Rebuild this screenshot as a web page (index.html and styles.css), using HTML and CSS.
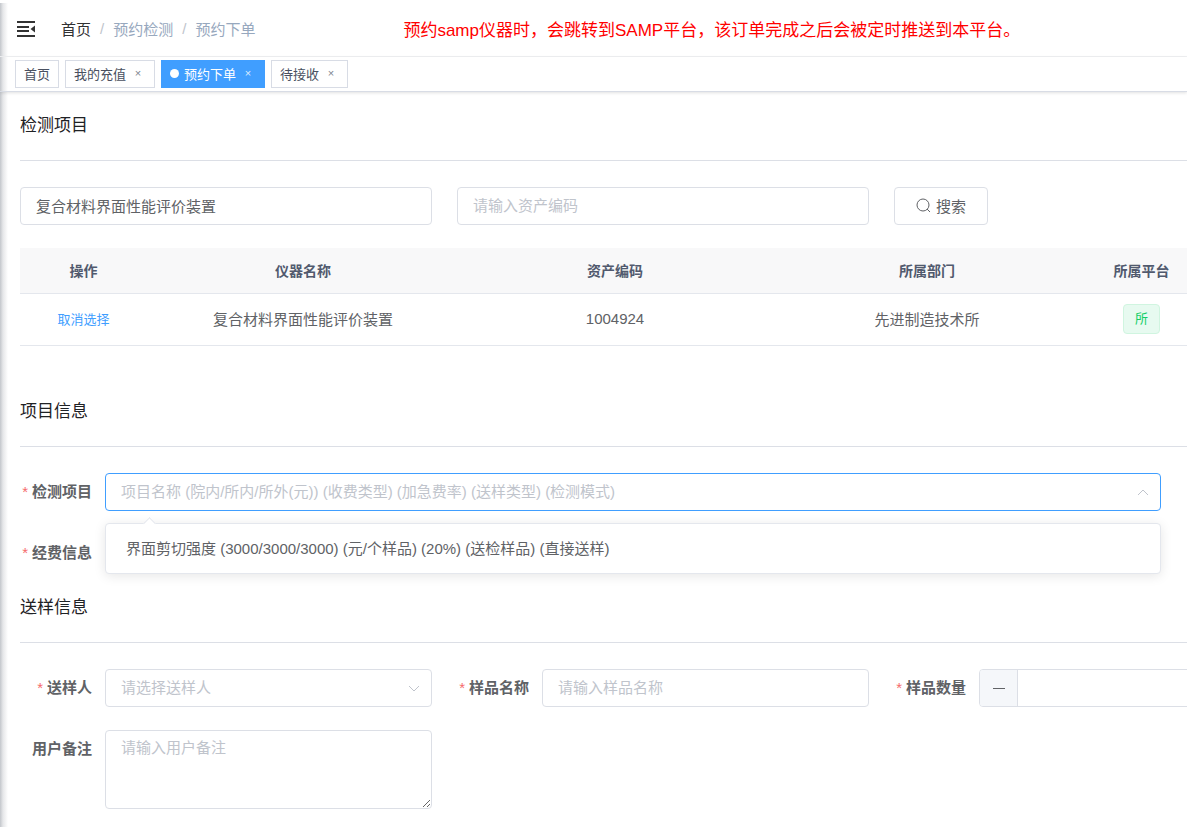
FILE: index.html
```html
<!DOCTYPE html>
<html lang="zh-CN">
<head>
    <meta charset="utf-8">
    <meta name="viewport" content="width=device-width, initial-scale=1">
    <title>预约下单</title>
    <link rel="stylesheet" href="styles.css">
</head>
<body>
    <div class="app-main">

        <header class="navbar">
            <button class="hamburger" type="button" aria-label="收起菜单">
                <svg viewBox="0 0 18 16" width="18" height="16">
                    <path d="M0 1h18M0 6h12M0 10h12M0 15h18" stroke="#333" stroke-width="2" fill="none"/>
                    <path d="M18 4.5v7L13.5 8z" fill="#333"/>
                </svg>
            </button>
            <nav class="breadcrumb">
                <a class="breadcrumb-home" href="#">首页</a>
                <span class="breadcrumb-separator">/</span>
                <span>预约检测</span>
                <span class="breadcrumb-separator">/</span>
                <span>预约下单</span>
            </nav>
            <p class="notice">预约samp仪器时，会跳转到SAMP平台，该订单完成之后会被定时推送到本平台。</p>
        </header>

        <nav class="tags-view">
            <div class="tag-item"><a href="#">首页</a></div>
            <div class="tag-item"><a href="#">我的充值</a><button class="tag-close" type="button" aria-label="关闭我的充值">×</button></div>
            <div class="tag-item active"><a href="#">预约下单</a><button class="tag-close" type="button" aria-label="关闭预约下单">×</button></div>
            <div class="tag-item"><a href="#">待接收</a><button class="tag-close" type="button" aria-label="关闭待接收">×</button></div>
        </nav>

        <main class="content">
            <section class="section">
                <h2 class="section-title">检测项目</h2>

                <form class="form-row">
                    <input class="input" type="text" id="instrumentName" name="instrumentName" aria-label="仪器名称" value="复合材料界面性能评价装置">
                    <input class="input" type="text" id="assetCode" name="assetCode" aria-label="资产编码" placeholder="请输入资产编码">
                    <button class="search-button" type="button">
                        <svg viewBox="0 0 15 15" width="15" height="15" fill="none" stroke="#606266">
                            <circle cx="7" cy="7" r="6"/>
                            <path d="M11 11l3 3"/>
                        </svg>
                        搜索
                    </button>
                </form>

                <table class="table">
                    <colgroup>
                        <col class="col-action">
                        <col>
                        <col>
                        <col>
                        <col class="col-platform">
                    </colgroup>
                    <thead>
                        <tr>
                            <th>操作</th>
                            <th>仪器名称</th>
                            <th>资产编码</th>
                            <th>所属部门</th>
                            <th>所属平台</th>
                        </tr>
                    </thead>
                    <tbody>
                        <tr>
                            <td><button class="text-button" type="button">取消选择</button></td>
                            <td>复合材料界面性能评价装置</td>
                            <td>1004924</td>
                            <td>先进制造技术所</td>
                            <td><span class="badge">所</span></td>
                        </tr>
                    </tbody>
                </table>
            </section>

            <section class="section">
                <h2 class="section-title">项目信息</h2>

                <div class="form-item form-item-wide">
                    <label class="form-label required" for="project">检测项目</label>
                    <div class="select-box">
                        <select class="input select focused" id="project" name="project">
                            <option value="">项目名称 (院内/所内/所外(元)) (收费类型) (加急费率) (送样类型) (检测模式)</option>
                        </select>
                        <svg class="select-arrow" viewBox="0 0 12 12" width="12" height="12"><path d="M1 9l5-5 5 5"/></svg>
                        <ul class="dropdown">
                            <li class="dropdown-item">界面剪切强度 (3000/3000/3000) (元/个样品) (20%) (送检样品) (直接送样)</li>
                        </ul>
                    </div>
                </div>

                <div class="form-item form-item-wide">
                    <span class="form-label required">经费信息</span>
                </div>
            </section>

            <section>
                <h2 class="section-title">送样信息</h2>

                <form class="form-row">
                    <div class="form-item">
                        <label class="form-label required" for="sender">送样人</label>
                        <div class="select-box">
                            <select class="input select" id="sender" name="sender">
                                <option value="">请选择送样人</option>
                            </select>
                            <svg class="select-arrow" viewBox="0 0 12 12" width="12" height="12"><path d="M1 4l5 5 5-5"/></svg>
                        </div>
                    </div>

                    <div class="form-item">
                        <label class="form-label required" for="sampleName">样品名称</label>
                        <input class="input" type="text" id="sampleName" name="sampleName" placeholder="请输入样品名称">
                    </div>

                    <div class="form-item">
                        <label class="form-label required" for="sampleCount">样品数量</label>
                        <div class="input-number">
                            <button class="decrease" type="button" aria-label="减少">
                                <svg viewBox="0 0 12 12" width="12" height="12"><path d="M0 6.5h12" stroke="#606266"/></svg>
                            </button>
                            <input class="count" type="text" id="sampleCount" name="sampleCount">
                        </div>
                    </div>

                    <div class="form-item">
                        <label class="form-label" for="remark">用户备注</label>
                        <textarea class="input textarea" id="remark" name="remark" placeholder="请输入用户备注"></textarea>
                    </div>
                </form>
            </section>
        </main>

    </div>
</body>
</html>
```

FILE: styles.css
```css
*{
    box-sizing: border-box;
}

body{
    margin: 0;
    background-color: white;
    color: #606266;
    font-family: "Liberation Sans", "Noto Sans CJK SC", sans-serif;
    font-size: 15px;
    overflow-x: hidden;
}

a{
    color: inherit;
    text-decoration: none;
}

button, input, select, textarea{
    font-family: inherit;
    font-size: 15px;
    color: #606266;
}

button{
    padding: 0;
    border: none;
    background: none;
    cursor: pointer;
}

/* shadow of the side menu falls on the left edge */
.app-main{
    min-height: calc(100vh - 3px);
    margin-top: 3px;
    overflow: hidden;
    background: linear-gradient(to right, #c3c6cb, #e6e7e9 3px, white 8px);
}

/* navbar */
.navbar{
    display: flex;
    align-items: center;
    height: 54px;
    padding: 0 0 2px 17px;
    border-bottom: 1px solid #f0f1f3;
}
.hamburger{
    display: flex;
    margin-right: 26px;
}
.breadcrumb{
    display: flex;
    align-items: center;
    color: #97a8be;
}
.breadcrumb-home{
    color: #303133;
}
.breadcrumb-separator{
    margin: 0 9px;
    color: #c0c4cc;
}
.notice{
    margin: 0 0 0 148px;
    color: red;
    font-size: 17px;
}

/* opened pages */
.tags-view{
    display: flex;
    gap: 6px;
    height: 35px;
    padding: 3px 15px;
    border-bottom: 1px solid #d8dce5;
    box-shadow: 0 1px 3px rgba(0, 0, 0, .12);
}
.tag-item{
    display: flex;
    align-items: center;
    height: 28px;
    padding: 0 8px 2px;
    border: 1px solid #d8dce5;
    background-color: white;
    color: #495060;
    font-size: 13px;
}
.tag-item.active{
    background-color: #409eff;
    border-color: #409eff;
    color: white;
}
.tag-item.active::before{
    content: "";
    width: 9px;
    height: 9px;
    margin-right: 5px;
    border-radius: 50%;
    background-color: white;
}
.tag-close{
    width: 16px;
    margin-left: 4px;
    color: #80858f;
    font-size: 11px;
}
.active .tag-close{
    color: #d9ecff;
}

.content{
    padding: 22px 0 18px 20px;
}
.section{
    margin-bottom: 54px;
}
.section + .section{
    margin-bottom: 24px;
}
.section-title{
    margin: 0 0 26px;
    padding-bottom: 22px;
    border-bottom: 1px solid #dcdfe6;
    color: #1f2225;
    font-size: 17px;
    font-weight: normal;
    line-height: 24px;
}

/* forms, the third column runs past the right edge */
.form-row{
    display: grid;
    grid-template-columns: repeat(3, 1fr);
    gap: 23px 25px;
    width: calc(100% + 119px);
}
.form-item{
    display: flex;
    align-items: flex-start;
}
.form-item-wide{
    margin-right: 26px;
}
.form-item-wide + .form-item-wide{
    margin-top: 23px;
}
.form-label{
    flex: none;
    width: 85px;
    padding-right: 13px;
    font-weight: bold;
    line-height: 38px;
    text-align: right;
}
.form-label.required::before{
    content: "*";
    margin-right: 4px;
    color: #f56c6c;
    font-weight: normal;
}
.input{
    width: 100%;
    min-width: 0;
    height: 38px;
    padding: 0 15px 2px;
    border: 1px solid #dcdfe6;
    border-radius: 4px;
    background-color: white;
    outline: none;
}
.input::placeholder{
    color: #c0c4cc;
}
.textarea{
    height: 79px;
    padding: 5px 15px;
    line-height: 23px;
    resize: vertical;
}

.select-box{
    position: relative;
    flex: 1;
}
.select{
    display: block;
    appearance: none;
    color: #c0c4cc;
}
.select.focused{
    border-color: #409eff;
}
.select-arrow{
    position: absolute;
    top: 13px;
    right: 12px;
    fill: none;
    stroke: #c0c4cc;
    pointer-events: none;
}
.dropdown{
    position: absolute;
    z-index: 10;
    top: 50px;
    left: 0;
    right: 0;
    margin: 0;
    padding: 6px 0;
    border: 1px solid #e4e7ed;
    border-radius: 4px;
    background-color: white;
    box-shadow: 0 2px 12px rgba(0, 0, 0, .1);
    list-style: none;
}
.dropdown::before{
    content: "";
    position: absolute;
    top: -5px;
    left: 39px;
    width: 8px;
    height: 8px;
    border: 1px solid #e4e7ed;
    border-right: none;
    border-bottom: none;
    background-color: white;
    transform: rotate(45deg);
}
.dropdown-item{
    padding: 0 20px;
    line-height: 37px;
}

.input-number{
    display: flex;
    flex: 1;
    height: 38px;
    border: 1px solid #dcdfe6;
    border-radius: 4px;
    overflow: hidden;
}
.decrease{
    display: flex;
    align-items: center;
    justify-content: center;
    width: 38px;
    border-right: 1px solid #dcdfe6;
    background-color: #f5f7fa;
}
.count{
    flex: 1;
    min-width: 0;
    border: none;
    outline: none;
    text-align: center;
}

.search-button{
    display: flex;
    align-items: center;
    justify-content: center;
    gap: 5px;
    justify-self: start;
    height: 38px;
    padding: 0 21px 2px;
    border: 1px solid #dcdfe6;
    border-radius: 4px;
}
.text-button{
    color: #409eff;
    font-size: 13px;
}

/* table */
.table{
    width: calc(100% + 13px);
    margin-top: 23px;
    border-collapse: separate;
    border-spacing: 0;
    table-layout: fixed;
    text-align: center;
}
.table th, .table td{
    padding: 0 0 2px;
    border-bottom: 1px solid #e4e7ed;
}
.table th{
    height: 46px;
    background-color: #f8f8f9;
    color: #515a6e;
    font-size: 14px;
}
.table td{
    height: 52px;
}
.col-action{
    width: 127px;
}
.col-platform{
    width: 117px;
}
.badge{
    display: inline-block;
    padding: 0 11px;
    border: 1px solid #d0f5e0;
    border-radius: 4px;
    background-color: #e7faf0;
    color: #13ce66;
    font-size: 13px;
    line-height: 28px;
}
```
